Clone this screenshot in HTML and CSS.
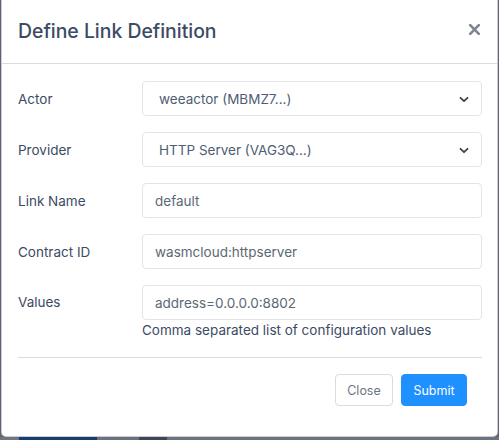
FILE: index.html
```html
<!DOCTYPE html>
<html lang="en">
<head>
<meta charset="utf-8">
<title>Define Link Definition</title>
<link rel="stylesheet" href="styles.css">
</head>
<body>
<div class="modal">
  <div class="modal-header">
    <h5 class="modal-title">Define Link Definition</h5>
    <button class="close" type="button" aria-label="Close">
      <svg width="11" height="11" viewBox="0 0 11 11"><path d="M1.2 1.2 L9.8 9.8 M9.8 1.2 L1.2 9.8" stroke="#7d8594" stroke-width="2.6" stroke-linecap="round" fill="none"/></svg>
    </button>
  </div>
  <div class="modal-body">
    <form class="link-form">
      <div class="form-row">
        <label class="col-label">Actor</label>
        <div class="field">
          <div class="select"><span>weeactor (MBMZ7...)</span>
            <svg class="chev" width="10" height="7" viewBox="0 0 10 7"><path d="M1.5 1.8 L5 5.2 L8.5 1.8" stroke="#3c4452" stroke-width="1.8" fill="none" stroke-linecap="round" stroke-linejoin="round"/></svg>
          </div>
        </div>
      </div>
      <div class="form-row">
        <label class="col-label">Provider</label>
        <div class="field">
          <div class="select"><span>HTTP Server (VAG3Q...)</span>
            <svg class="chev" width="10" height="7" viewBox="0 0 10 7"><path d="M1.5 1.8 L5 5.2 L8.5 1.8" stroke="#3c4452" stroke-width="1.8" fill="none" stroke-linecap="round" stroke-linejoin="round"/></svg>
          </div>
        </div>
      </div>
      <div class="form-row">
        <label class="col-label">Link Name</label>
        <div class="field"><div class="input">default</div></div>
      </div>
      <div class="form-row">
        <label class="col-label">Contract ID</label>
        <div class="field"><div class="input">wasmcloud:httpserver</div></div>
      </div>
      <div class="form-row values-row">
        <label class="col-label">Values</label>
        <div class="field">
          <div class="input">address=0.0.0.0:8802</div>
          <small class="form-text">Comma separated list of configuration values</small>
        </div>
      </div>
      <hr class="divider">
      <div class="actions">
        <button type="button" class="btn btn-close">Close</button>
        <button type="button" class="btn btn-submit">Submit</button>
      </div>
    </form>
  </div>
</div>
<div class="page-strip">
  <span class="seg seg-a"></span>
  <span class="seg seg-b"></span>
  <span class="seg seg-c"></span>
  <span class="seg seg-d"></span>
  <span class="seg seg-e"></span>
</div>
</body>
</html>
```
FILE: styles.css
```css
* { box-sizing: border-box; }

html, body {
  margin: 0;
  height: 100%;
}

body {
  background: #5f6472;
  font-family: Inter, "Noto Sans", sans-serif;
  color: #3c4b64;
  overflow: hidden;
}

.modal {
  margin-left: 1px;
  width: 497px;
  height: 437px;
  background: #fff;
  border: 1px solid rgba(0, 0, 21, 0.2);
  border-top: none;
  border-radius: 0 0 5px 5px;
  display: flex;
  flex-direction: column;
}

.modal-header {
  display: flex;
  align-items: center;
  justify-content: space-between;
  padding: 16px 16px 17px 16px;
  border-bottom: 1px solid #d8dbe0;
}

.modal-title {
  margin: 0;
  font-size: 19.4px;
  line-height: 30px;
  font-weight: 500;
  color: #3c4b64;
}

.close {
  border: 0;
  background: none;
  padding: 0;
  width: 11px;
  height: 11px;
  display: block;
  margin-top: -4px;
  margin-right: 1px;
}

.close svg { display: block; }

.modal-body {
  padding: 17px 15px 16px 16px;
}

.form-row {
  display: grid;
  grid-template-columns: 124px 1fr;
  align-items: center;
  margin-bottom: 16px;
}

.values-row { align-items: start; }
.values-row .col-label { line-height: 35px; }

.col-label {
  font-size: 13.5px;
  color: #3c4b64;
}

.input,
.select {
  height: 35px;
  border: 1px solid #e2e4e8;
  border-radius: 4px;
  background: #fff;
  font-size: 13.5px;
  color: #5c6873;
  display: flex;
  align-items: center;
}

.input { padding: 0 12px; }

.select {
  padding: 0 12px 0 16px;
  justify-content: space-between;
  color: #4f5d73;
}

.chev { display: block; margin-top: 1px; }

.form-text {
  display: block;
  margin-top: 1px;
  font-size: 13.5px;
  line-height: 18px;
  color: #3c4b64;
}

.divider {
  border: 0;
  border-top: 1px solid #d8dbe0;
  margin: 18px 0 16px 0;
}

.actions {
  display: flex;
  justify-content: flex-end;
  gap: 8px;
  padding-right: 15px;
}

.btn {
  height: 32px;
  border-radius: 4px;
  font-family: inherit;
  font-size: 12.5px;
  padding: 0;
  cursor: pointer;
}

.btn-close {
  background: #fff;
  border: 1px solid #d8dbe0;
  color: #6b7585;
  width: 58px;
}

.btn-submit {
  background: #1e90ff;
  border: 1px solid #1e90ff;
  color: #fff;
  width: 66px;
}

.page-strip {
  display: flex;
  height: 3px;
  background: #6c717e;
}

.seg { display: block; height: 100%; }
.seg-a { width: 19px; background: #70757f; }
.seg-b { width: 78px; background: #163d70; }
.seg-c { width: 42px; background: #6c717e; }
.seg-d { width: 28px; background: #3f4655; }
.seg-e { flex: 1; background: #6e7380; }
```
